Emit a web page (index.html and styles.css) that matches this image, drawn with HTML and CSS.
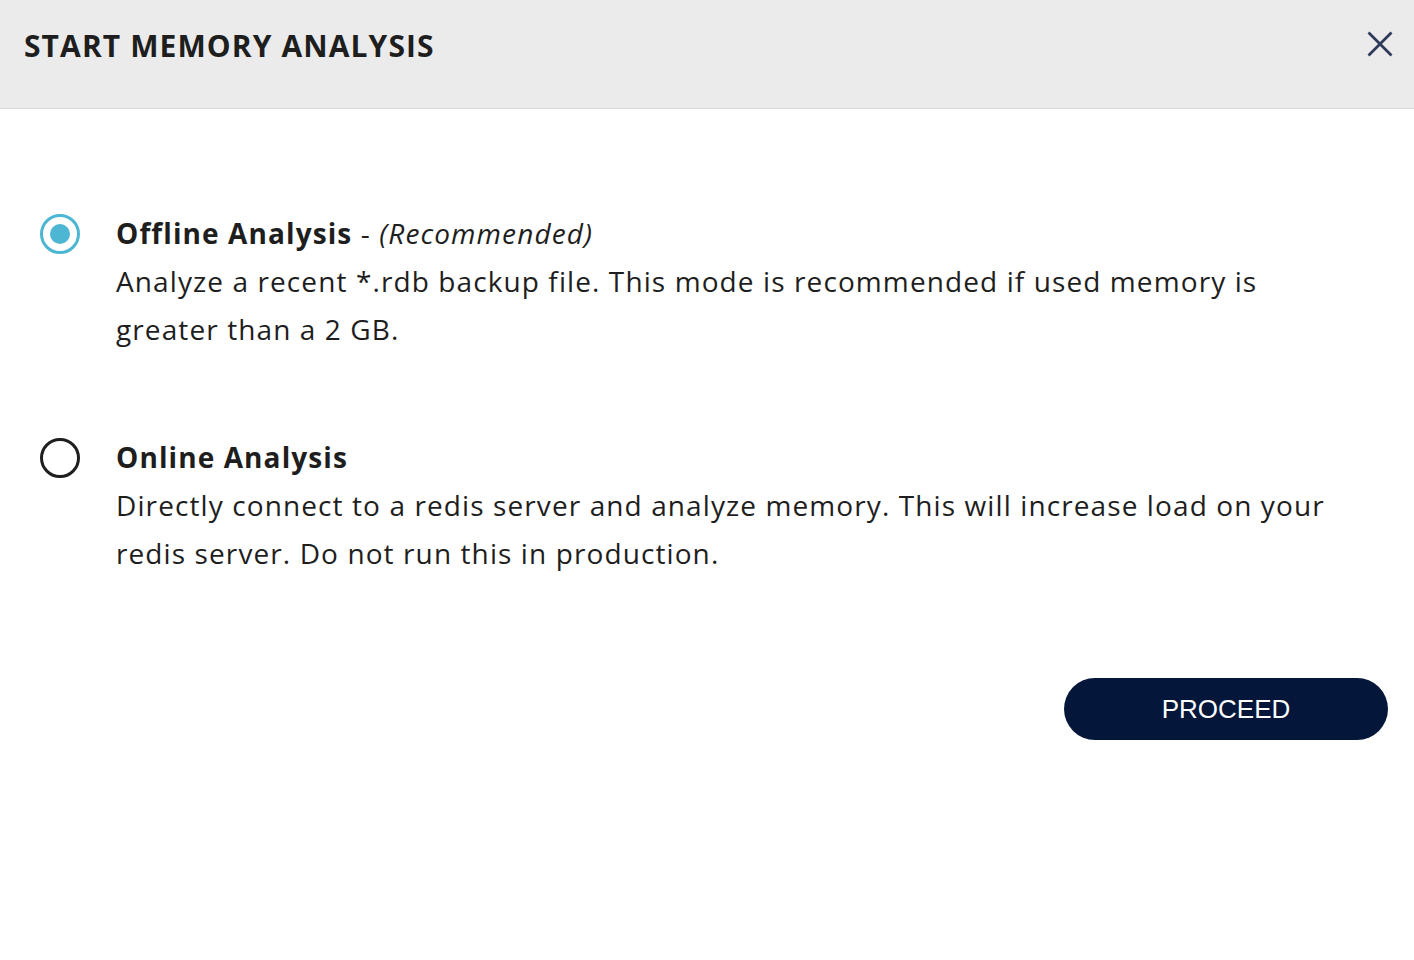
FILE: index.html
```html
<!DOCTYPE html>
<html>
<head>
<meta charset="utf-8">
<link rel="stylesheet" href="styles.css">
</head>
<body>
<div class="modal">
  <header class="modal-header">
    <h1 class="modal-title">START MEMORY ANALYSIS</h1>
    <button class="close-btn" aria-label="Close">
      <svg width="28" height="28" viewBox="0 0 28 28"><path d="M2.5 2.5 L25.5 25.5 M25.5 2.5 L2.5 25.5" stroke="#2e3a59" stroke-width="2.8" fill="none"/></svg>
    </button>
  </header>
  <main class="modal-body">
    <div class="option">
      <span class="radio radio-checked"><span class="radio-dot"></span></span>
      <div class="option-text">
        <div class="option-title"><b>Offline Analysis</b> - <i>(Recommended)</i></div>
        <div class="option-desc">Analyze a recent *.rdb backup file. This mode is recommended if used memory is greater than a 2 GB.</div>
      </div>
    </div>
    <div class="option">
      <span class="radio"></span>
      <div class="option-text">
        <div class="option-title"><b>Online Analysis</b></div>
        <div class="option-desc">Directly connect to a redis server and analyze memory. This will increase load on your redis server. Do not run this in production.</div>
      </div>
    </div>
    <div class="actions">
      <button class="proceed-btn">PROCEED</button>
    </div>
  </main>
</div>
</body>
</html>
```
FILE: styles.css
```css
html, body {
  margin: 0;
  padding: 0;
  background: #ffffff;
}
body {
  font-family: "Open Sans", Lato, sans-serif;
  color: #1e1e1e;
}
.modal-header {
  height: 108px;
  background: #ebebeb;
  border-bottom: 1px solid #dadada;
  display: flex;
  align-items: flex-start;
  justify-content: space-between;
  padding: 0 20px 0 24px;
}
.modal-title {
  margin: 28px 0 0 0;
  font-size: 30px;
  font-weight: 700;
  line-height: 36px;
  color: #1e1e1e;
  letter-spacing: 1.1px;
}
.close-btn {
  margin-top: 30px;
  background: none;
  border: none;
  padding: 0;
  width: 28px;
  height: 28px;
  cursor: pointer;
}
.modal-body {
  padding: 100px 26px 0 40px;
  display: flex;
  flex-direction: column;
  gap: 80px;
}
.option {
  display: flex;
  align-items: flex-start;
}
.radio {
  width: 34px;
  height: 34px;
  border: 3px solid #1e1e1e;
  border-radius: 50%;
  flex: none;
  margin-top: 5px;
  display: flex;
  align-items: center;
  justify-content: center;
}
.radio-checked {
  border-color: #4db6d2;
}
.radio-dot {
  width: 20px;
  height: 20px;
  border-radius: 50%;
  background: #4db6d2;
}
.option-text {
  margin-left: 36px;
  font-size: 28px;
  line-height: 48px;
  letter-spacing: 1.1px;
  max-width: 1240px;
}
.option-title b {
  font-weight: 700;
}
.option-title i {
  font-style: italic;
}
.actions {
  display: flex;
  justify-content: flex-end;
  margin-top: 21px;
}
.proceed-btn {
  width: 324px;
  height: 62px;
  border-radius: 31px;
  background: #041639;
  color: #ffffff;
  border: none;
  font-family: "Liberation Sans", Arial, sans-serif;
  font-size: 26px;
  cursor: pointer;
}
```
